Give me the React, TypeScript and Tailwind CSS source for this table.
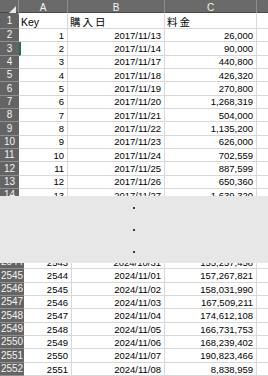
import React from "react";

const top: [string, string, string, string][] = [
  ["2", "1", "2017/11/13", "26,000"],
  ["3", "2", "2017/11/14", "90,000"],
  ["4", "3", "2017/11/17", "440,800"],
  ["5", "4", "2017/11/18", "426,320"],
  ["6", "5", "2017/11/19", "270,800"],
  ["7", "6", "2017/11/20", "1,268,319"],
  ["8", "7", "2017/11/21", "504,000"],
  ["9", "8", "2017/11/22", "1,135,200"],
  ["10", "9", "2017/11/23", "626,000"],
  ["11", "10", "2017/11/24", "702,559"],
  ["12", "11", "2017/11/25", "887,599"],
  ["13", "12", "2017/11/26", "650,360"],
  ["14", "13", "2017/11/27", "1,639,320"],
];

const bottom: [string, string, string, string][] = [
  ["2544", "2543", "2024/10/31", "155,257,458"],
  ["2545", "2544", "2024/11/01", "157,267,821"],
  ["2546", "2545", "2024/11/02", "158,031,990"],
  ["2547", "2546", "2024/11/03", "167,509,211"],
  ["2548", "2547", "2024/11/04", "174,612,108"],
  ["2549", "2548", "2024/11/05", "166,731,753"],
  ["2550", "2549", "2024/11/06", "168,239,402"],
  ["2551", "2550", "2024/11/07", "190,823,466"],
  ["2552", "2551", "2024/11/08", "8,838,959"],
];

const font = { fontFamily: '"Liberation Sans", Arial, "Noto Sans CJK JP", sans-serif' };

function Row({ r, wide, green }: { r: [string, string, string, string]; wide?: boolean; green?: boolean }) {
  return (
    <div
      className={
        "grid h-[13.33px] shrink-0 " +
        (wide ? "grid-cols-[24px_48px_93px_92px_1fr]" : "grid-cols-[19px_49px_97px_92px_1fr]")
      }
    >
      <div className="flex items-end pb-[1px] justify-center bg-[#646464] border-b border-[#8e8e8e] text-[#f2f2f2] text-[10px] leading-none">
        {r[0]}
      </div>
      <div
        className={
          "flex items-end pb-[1px] justify-end pr-[3px] border-b border-r border-[#d8d8d8] leading-none " +
          (green ? "border-l-2 border-l-[#217346]" : "")
        }
      >
        {r[1]}
      </div>
      <div className="flex items-end pb-[1px] justify-end pr-[3px] border-b border-r border-[#d8d8d8] leading-none">{r[2]}</div>
      <div className="flex items-end pb-[1px] justify-end pr-[3px] border-b border-r border-[#d8d8d8] leading-none">{r[3]}</div>
      <div className="border-b border-[#d8d8d8]" />
    </div>
  );
}

export default function App() {
  return (
    <div className="w-[268px] h-[376px] bg-white flex flex-col overflow-hidden text-[9.5px] text-black" style={font}>
      <div className="h-[196px] shrink-0 overflow-hidden flex flex-col">
        <div className="grid grid-cols-[19px_49px_97px_92px_1fr] h-[13px] shrink-0 bg-[#6a6a6a] text-[#f4f4f4] border-b border-[#4a4a4a]">
          <div className="relative border-r border-[#8e8e8e]">
            <svg className="absolute right-[2px] bottom-[2px]" width="7" height="7" viewBox="0 0 7 7">
              <polygon points="7,0 7,7 0,7" fill="#e8e8e8" />
            </svg>
          </div>
          <div className="flex items-center justify-center border-r border-[#8e8e8e] text-[10px]">A</div>
          <div className="flex items-center justify-center border-r border-[#8e8e8e] text-[10px]">B</div>
          <div className="flex items-center justify-center border-r border-[#8e8e8e] text-[10px]">C</div>
          <div />
        </div>
        <div className="grid grid-cols-[19px_49px_97px_92px_1fr] h-[16px] shrink-0">
          <div className="flex items-center justify-center bg-[#646464] border-b border-[#8e8e8e] text-[#f2f2f2] text-[10px]">1</div>
          <div className="flex items-end pl-[2px] pb-[1px] border-b border-r border-[#d8d8d8] text-[10.5px] leading-none">Key</div>
          <div className="flex items-end pl-[2px] pb-[1px] border-b border-r border-[#d8d8d8] text-[10.5px] tracking-[2px] leading-none" style={{ fontFamily: '"Noto Sans CJK JP", sans-serif' }}>購入日</div>
          <div className="flex items-end pl-[2px] pb-[1px] border-b border-r border-[#d8d8d8] text-[10.5px] tracking-[2px] leading-none" style={{ fontFamily: '"Noto Sans CJK JP", sans-serif' }}>料金</div>
          <div className="border-b border-[#d8d8d8]" />
        </div>
        {top.map((r) => (
          <Row key={r[0]} r={r} green={r[0] === "3"} />
        ))}
      </div>
      <div className="h-[67px] shrink-0 bg-[#e7e7e7] flex flex-col items-center justify-center gap-[20px]">
        <div className="w-[2px] h-[2px] rounded-full bg-black" />
        <div className="w-[2px] h-[2px] rounded-full bg-black" />
        <div className="w-[2px] h-[2px] rounded-full bg-black" />
      </div>
      <div className="flex-1 overflow-hidden flex flex-col justify-end">
        {bottom.map((r) => (
          <Row key={r[0]} r={r} wide />
        ))}
      </div>
    </div>
  );
}
